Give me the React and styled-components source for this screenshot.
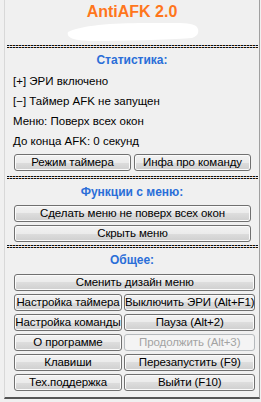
import React from "react";
import styled, { createGlobalStyle } from "styled-components";

const GlobalStyle = createGlobalStyle`
  html, body {
    margin: 0;
    padding: 0;
    background: #f0f0f0;
  }
  body {
    font-family: "Liberation Sans", Arial, sans-serif;
    font-size: 11.5px;
    color: #000;
  }
`;

const Window = styled.div`
  box-sizing: border-box;
  margin-left: 4px;
  width: 256px;
  height: 399px;
  border-left: 1px solid #d8d8d8;
  border-right: 1px solid #a0a0a0;
  border-bottom: 2px solid #555;
  background: #f0f0f0;
  display: flex;
  flex-direction: column;
`;

const Title = styled.h1`
  margin: 0;
  padding-top: 2px;
  height: 20px;
  line-height: 20px;
  font-size: 16px;
  font-weight: bold;
  color: #ff761c;
  text-align: center;
`;

const Scribble = styled.svg`
  display: block;
  width: 254px;
  height: 21px;
`;

const Separator = styled.div`
  margin: ${(p) => p.$top}px 0 0 2px;
  height: 3px;
  width: 251px;
  background:
    repeating-linear-gradient(90deg, #111 0 2px, #6a9ad8 2px 3px, #111 3px 5px, #d8893a 5px 6px) top / 100% 1px no-repeat,
    repeating-linear-gradient(90deg, #111 0 2px, #d8893a 2px 3px, #111 3px 5px, #6a9ad8 5px 6px) bottom / 100% 1px no-repeat;
`;

const Header = styled.h2`
  margin: ${(p) => p.$top}px 0 0;
  height: 16px;
  line-height: 16px;
  font-size: 12px;
  font-weight: bold;
  color: #2a6ed8;
  text-align: center;
`;

const InfoList = styled.div`
  margin-top: 3px;
  padding-left: 8px;
  display: flex;
  flex-direction: column;
`;

const InfoLine = styled.div`
  height: 20px;
  line-height: 20px;
  white-space: nowrap;
`;

const ButtonGrid = styled.div`
  margin: ${(p) => p.$top}px 8px 0 9px;
  display: grid;
  grid-template-columns: ${(p) => p.$cols || "1fr 1fr"};
  column-gap: ${(p) => p.$gap || 3}px;
  row-gap: 3px;
  grid-auto-rows: 17px;
`;

const Button = styled.button`
  box-sizing: border-box;
  grid-column: ${(p) => (p.$wide ? "1 / -1" : "auto")};
  height: 17px;
  padding: 0;
  margin: 0;
  font-family: "Liberation Sans", Arial, sans-serif;
  font-size: 11.5px;
  letter-spacing: -0.1px;
  line-height: 15px;
  white-space: nowrap;
  overflow: visible;
  color: ${(p) => (p.disabled ? "#a3a3a3" : "#000")};
  border: 1px solid ${(p) => (p.disabled ? "#b5b9bc" : "#707070")};
  border-radius: 3px;
  background: ${(p) =>
    p.disabled
      ? "#f4f4f4"
      : "linear-gradient(#f2f2f2 0%, #ebebeb 50%, #dddddd 50%, #cfcfcf 100%)"};
  box-shadow: inset 0 0 0 1px ${(p) => (p.disabled ? "#f4f4f4" : "#fbfbfb")};
  text-align: center;
`;

export default function App() {
  return (
    <>
      <GlobalStyle />
      <Window>
        <Title>AntiAFK 2.0</Title>
        <Scribble viewBox="0 0 254 21">
          <path
            d="M63 10 C 80 2, 115 1, 145 1 C 170 1, 186 0, 191 4 C 195 8, 194 14, 187 16 C 160 18, 120 19, 88 19 C 70 19, 61 16, 63 10 Z"
            fill="#fff"
          />
        </Scribble>
        <Separator $top={2} />
        <Header $top={4}>Статистика:</Header>
        <InfoList>
          <InfoLine>[+] ЭРИ включено</InfoLine>
          <InfoLine>[−] Таймер AFK не запущен</InfoLine>
          <InfoLine>Меню: Поверх всех окон</InfoLine>
          <InfoLine>До конца AFK: 0 секунд</InfoLine>
        </InfoList>
        <ButtonGrid $top={3}>
          <Button>Режим таймера</Button>
          <Button>Инфа про команду</Button>
        </ButtonGrid>
        <Separator $top={5} />
        <Header $top={5}>Функции с меню:</Header>
        <ButtonGrid $top={5}>
          <Button $wide>Сделать меню не поверх всех окон</Button>
          <Button $wide>Скрыть меню</Button>
        </ButtonGrid>
        <Separator $top={3} />
        <Header $top={4}>Общее:</Header>
        <ButtonGrid $top={6} $cols="108px 1fr" $gap={2}>
          <Button $wide>Сменить дизайн меню</Button>
          <Button>Настройка таймера</Button>
          <Button>Выключить ЭРИ (Alt+F1)</Button>
          <Button>Настройка команды</Button>
          <Button>Пауза (Alt+2)</Button>
          <Button>О программе</Button>
          <Button disabled>Продолжить (Alt+3)</Button>
          <Button>Клавиши</Button>
          <Button>Перезапустить (F9)</Button>
          <Button>Тех.поддержка</Button>
          <Button>Выйти (F10)</Button>
        </ButtonGrid>
      </Window>
    </>
  );
}
